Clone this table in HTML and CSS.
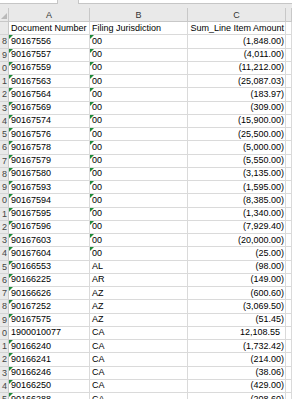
FILE: index.html
```html
<!DOCTYPE html>
<html>
<head>
<meta charset="utf-8">
<link rel="stylesheet" href="styles.css">
</head>
<body>
<div class="sheet">
  <div class="chrome">
    <div class="namebox"></div>
    <div class="formulabox"></div>
  </div>
  <div class="row colhead">
    <div class="corner"><span class="tri"></span></div>
    <div class="ch">A</div>
    <div class="ch">B</div>
    <div class="ch">C</div>
    <div class="ch"></div>
  </div>
  <div class="row">
    <div class="rh"></div>
    <div class="c">Document Number</div>
    <div class="c">Filing Jurisdiction</div>
    <div class="c num">Sum_Line Item Amount</div>
    <div class="c"></div>
  </div>
  <div id="body"></div>
</div>
<script src="app.js"></script>
</body>
</html>
```

FILE: app.js
```js
const rows = [
  ["90167556","00","(1,848.00)"],
  ["90167557","00","(4,011.00)"],
  ["90167559","00","(11,212.00)"],
  ["90167563","00","(25,087.03)"],
  ["90167564","00","(183.97)"],
  ["90167569","00","(309.00)"],
  ["90167574","00","(15,900.00)"],
  ["90167576","00","(25,500.00)"],
  ["90167578","00","(5,000.00)"],
  ["90167579","00","(5,550.00)"],
  ["90167580","00","(3,135.00)"],
  ["90167593","00","(1,595.00)"],
  ["90167594","00","(8,385.00)"],
  ["90167595","00","(1,340.00)"],
  ["90167596","00","(7,929.40)"],
  ["90167603","00","(20,000.00)"],
  ["90167604","00","(25.00)"],
  ["90166553","AL","(98.00)"],
  ["90166225","AR","(149.00)"],
  ["90166626","AZ","(600.60)"],
  ["90167252","AZ","(3,069.50)"],
  ["90167575","AZ","(51.45)"],
  ["1900010077","CA","12,108.55"],
  ["90166240","CA","(1,732.42)"],
  ["90166241","CA","(214.00)"],
  ["90166246","CA","(38.06)"],
  ["90166250","CA","(429.00)"],
  ["90166288","CA","(208.60)"]
];
const body = document.getElementById("body");
rows.forEach((r, i) => {
  const row = document.createElement("div");
  row.className = "row";
  const aFlag = r[0].length === 8 ? " flag" : "";
  const bFlag = r[1] === "00" ? " flag" : "";
  const pos = r[2].startsWith("(") ? "" : " pos";
  row.innerHTML =
    '<div class="rh">' + ((8 + i) % 10) + '</div>' +
    '<div class="c' + aFlag + '">' + r[0] + '</div>' +
    '<div class="c' + bFlag + '">' + r[1] + '</div>' +
    '<div class="c num' + pos + '">' + r[2] + '</div>' +
    '<div class="c"></div>';
  body.appendChild(row);
});
```

FILE: styles.css
```css
html, body {
  margin: 0;
  padding: 0;
  background: #ffffff;
  overflow: hidden;
}
.sheet {
  width: 292px;
  height: 399px;
  overflow: hidden;
  font-family: "Liberation Sans", Arial, sans-serif;
  font-size: 9px;
  color: #000;
}
.chrome {
  height: 8px;
  background: #e9e9e9;
  display: flex;
  align-items: flex-start;
}
.namebox {
  width: 57px;
  height: 3px;
  background: #fff;
  border-bottom: 1px solid #c6c6c6;
  border-right: 1px solid #c6c6c6;
}
.formulabox {
  margin-left: 20px;
  flex: 1;
  height: 3px;
  background: #fff;
  border-bottom: 1px solid #c6c6c6;
  border-left: 1px solid #c6c6c6;
}
.row {
  display: grid;
  grid-template-columns: 9px 81px 98px 98px 1fr;
  height: 13.25px;
  box-sizing: border-box;
}
.row > div {
  box-sizing: border-box;
  border-right: 1px solid #dadada;
  border-bottom: 1px solid #dadada;
  overflow: hidden;
  white-space: nowrap;
  position: relative;
}
.colhead {
  height: 14px;
  background: #e9e9e9;
}
.colhead > div {
  border-right: 1px solid #c8c8c8;
  border-bottom: 1px solid #c8c8c8;
}
.ch {
  text-align: center;
  color: #333;
  line-height: 14px;
  font-size: 9px;
}
.corner .tri {
  position: absolute;
  right: 1px;
  bottom: 2px;
  width: 0;
  height: 0;
  border-left: 6px solid transparent;
  border-bottom: 6px solid #b9b9b9;
}
.rh {
  background: #e9e9e9;
  color: #444;
  display: flex;
  justify-content: flex-end;
  align-items: center;
  padding-right: 1px;
}
.row > .rh {
  border-right-color: #c8c8c8;
  border-bottom-color: #d4d4d4;
}
.c {
  padding-left: 2px;
  line-height: 13px;
  display: flex;
  align-items: center;
}
.num {
  justify-content: flex-end;
  padding-left: 0;
  padding-right: 1px;
}
.num.pos {
  padding-right: 5px;
}
.flag::before {
  content: "";
  position: absolute;
  left: 0;
  top: 0;
  width: 0;
  height: 0;
  border-top: 4px solid #1e8a3a;
  border-right: 4px solid transparent;
}
```
